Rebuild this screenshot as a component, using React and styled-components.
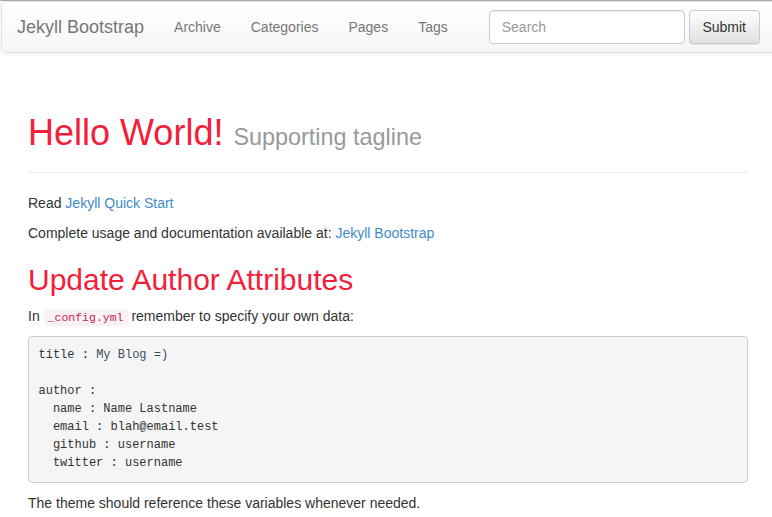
import React from 'react';
import styled, { createGlobalStyle } from 'styled-components';

const GlobalStyle = createGlobalStyle`
    html, body {
        margin: 0;
        padding: 0;
        background: #fff;
        overflow-x: hidden;
    }
    body {
        font-family: "Liberation Sans", Arial, Helvetica, sans-serif;
        font-size: 14px;
        line-height: 20px;
        color: #333;
        border-top: 1px solid #a9a9a9;
    }
`

const Navbar = styled.nav`
    display: flex;
    align-items: center;
    height: 50px;
    margin-left: 1px;
    margin-right: -12px;
    border: 1px solid #e3e3e3;
    border-radius: 4px;
    background-image: linear-gradient(to bottom, #ffffff 0%, #f6f6f6 100%);
    box-shadow: inset 0 1px 0 rgba(255, 255, 255, 0.15), 0 1px 5px rgba(0, 0, 0, 0.075);
`
const Brand = styled.a`
    padding: 0 15px;
    font-size: 18px;
    line-height: 50px;
    color: #777;
    text-decoration: none;
`
const NavList = styled.ul`
    display: flex;
    list-style: none;
    margin: 0;
    padding: 0;
`
const NavLink = styled.a`
    display: block;
    padding: 0 15px;
    line-height: 50px;
    color: #777;
    text-decoration: none;
`
const SearchForm = styled.form`
    display: flex;
    gap: 4px;
    margin-left: 26px;
`
const SearchInput = styled.input`
    box-sizing: border-box;
    width: 196px;
    height: 34px;
    padding: 6px 12px;
    font-family: inherit;
    font-size: 14px;
    color: #555;
    border: 1px solid #ccc;
    border-radius: 4px;
    background: #fff;
    box-shadow: inset 0 1px 1px rgba(0, 0, 0, 0.075);
    outline: none;
    &::placeholder {
        color: #999;
    }
`
const SubmitButton = styled.button`
    box-sizing: border-box;
    width: 71px;
    height: 34px;
    font-family: inherit;
    font-size: 14px;
    color: #333;
    border: 1px solid #ccc;
    border-radius: 4px;
    background-image: linear-gradient(to bottom, #ffffff 0%, #e0e0e0 100%);
    box-shadow: inset 0 1px 0 rgba(255, 255, 255, 0.15), 0 1px 1px rgba(0, 0, 0, 0.075);
`

const Container = styled.main`
    width: 720px;
    margin: 0 0 0 28px;
    padding-top: 60px;
`
const PageHeader = styled.div`
    padding-bottom: 9px;
    border-bottom: 1px solid #eee;
    margin-bottom: 20px;
`
const Title = styled.h1`
    margin: 0 0 10px;
    height: 39.6px;
    font-size: 36px;
    font-weight: normal;
    line-height: 39.6px;
    color: #f2203a;
`
const Tagline = styled.small`
    font-size: 23.4px;
    line-height: 1;
    color: #999;
`
const Paragraph = styled.p`
    margin: 0 0 10px;
    height: ${props => props.$fixed ? '20px' : 'auto'};
`
const Link = styled.a`
    color: #428bca;
    text-decoration: none;
`
const Heading = styled.h2`
    margin: 20px 0 10px;
    font-size: 30px;
    font-weight: normal;
    line-height: 33px;
    color: #f2203a;
`
const InlineCode = styled.code`
    padding: 2px 4px;
    font-family: "Liberation Mono", Consolas, monospace;
    font-size: 11.5px;
    line-height: 1;
    color: #c7254e;
    background: #f9f2f4;
    border-radius: 4px;
`
const CodeBlock = styled.pre`
    margin: 0 0 10px;
    padding: 9.5px;
    font-family: "Liberation Mono", Consolas, monospace;
    font-size: 12px;
    line-height: 18px;
    color: #333;
    background: #f5f5f5;
    border: 1px solid #ccc;
    border-radius: 4px;
`
const Value = styled.span`
    color: ${props => props.$muted ? '#3d4f63' : '#333'};
`

const navItems = ['Archive', 'Categories', 'Pages', 'Tags'];

const config = [
    ['title', 'My Blog =)', ''],
    null,
    ['author', '', ''],
    ['name', 'Name Lastname', '  '],
    ['email', 'blah@email.test', '  '],
    ['github', 'username', '  '],
    ['twitter', 'username', '  '],
];

export default function App() {
    return (
        <>
            <GlobalStyle />
            <Navbar>
                <Brand href="#">Jekyll Bootstrap</Brand>
                <NavList>
                    {navItems.map(item => (
                        <li key={item}><NavLink href="#">{item}</NavLink></li>
                    ))}
                </NavList>
                <SearchForm onSubmit={e => e.preventDefault()}>
                    <SearchInput type="text" placeholder="Search" />
                    <SubmitButton type="submit">Submit</SubmitButton>
                </SearchForm>
            </Navbar>
            <Container>
                <PageHeader>
                    <Title>Hello World! <Tagline>Supporting tagline</Tagline></Title>
                </PageHeader>
                <Paragraph>Read <Link href="#">Jekyll Quick Start</Link></Paragraph>
                <Paragraph>Complete usage and documentation available at: <Link href="#">Jekyll Bootstrap</Link></Paragraph>
                <Heading>Update Author Attributes</Heading>
                <Paragraph $fixed>In <InlineCode>_config.yml</InlineCode> remember to specify your own data:</Paragraph>
                <CodeBlock>
                    {config.map((line, i) => line === null ? '\n' : (
                        <React.Fragment key={i}>
                            {line[2]}{line[0]} : <Value $muted={i === 0}>{line[1]}</Value>{i < config.length - 1 ? '\n' : ''}
                        </React.Fragment>
                    ))}
                </CodeBlock>
                <Paragraph>The theme should reference these variables whenever needed.</Paragraph>
            </Container>
        </>
    );
}
